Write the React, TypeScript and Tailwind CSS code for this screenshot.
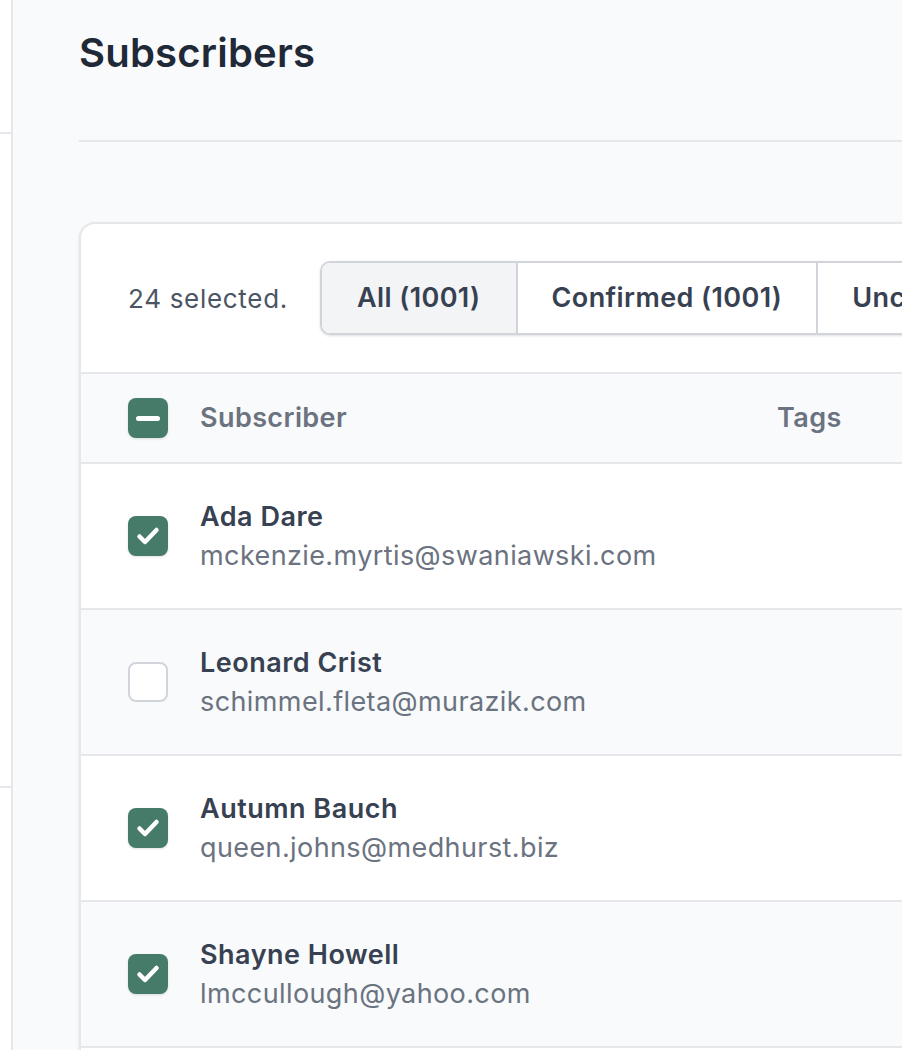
const subscribers = [
  { name: 'Ada Dare', email: 'mckenzie.myrtis@swaniawski.com', checked: true },
  { name: 'Leonard Crist', email: 'schimmel.fleta@murazik.com', checked: false },
  { name: 'Autumn Bauch', email: 'queen.johns@medhurst.biz', checked: true },
  { name: 'Shayne Howell', email: 'lmccullough@yahoo.com', checked: true },
  { name: 'Lorine Bins', email: 'ebert.kaley@gmail.com', checked: true },
];

function Checkbox({ state }: { state: 'checked' | 'unchecked' | 'mixed' }) {
  if (state === 'unchecked') {
    return <div className="w-[40px] h-[40px] shrink-0 rounded-[8px] border-2 border-[#d1d5db] bg-white" />;
  }
  return (
    <div className="w-[40px] h-[40px] shrink-0 rounded-[8px] bg-[#467a69] flex items-center justify-center shadow-sm">
      {state === 'checked' ? (
        <svg className="w-[40px] h-[40px]" viewBox="0 0 40 40" fill="none">
          <path d="M11.5 20.5L17 26L28.5 14" stroke="white" strokeWidth="4.5" strokeLinecap="round" strokeLinejoin="round" />
        </svg>
      ) : (
        <div className="w-[24px] h-[5px] rounded-full bg-white" />
      )}
    </div>
  );
}

export default function App() {
  return (
    <div className="flex w-full h-[1050px] overflow-hidden bg-[#f9fafb] font-['Inter',sans-serif]">
      {/* Sidebar edge */}
      <div className="w-[13px] shrink-0 border-r-2 border-[#e5e7eb] bg-white">
        <div className="h-[134px] border-b-2 border-[#e5e7eb]" />
        <div className="h-[654px] border-b-2 border-[#e5e7eb]" />
      </div>

      {/* Main */}
      <div className="flex-1 min-w-0 pl-[66px]">
        <h1 className="pt-[29px] text-[40px] leading-[48px] font-semibold text-[#1f2937] tracking-[0.2px]">
          Subscribers
        </h1>
        <div className="mt-[63px] border-t-2 border-[#e5e7eb]" />

        <div className="mt-[80px] w-[900px] rounded-[16px] border-2 border-[#e5e7eb] bg-white shadow-sm overflow-hidden">
          {/* Toolbar */}
          <div className="flex items-center px-[47px] py-[37px] whitespace-nowrap">
            <span className="shrink-0 text-[26px] tracking-[0.7px] text-[#4b5563] mr-[32px]">24 selected.</span>
            <div className="flex shrink-0 rounded-[10px] border-2 border-[#d1d5db] shadow-sm overflow-hidden">
              <button className="h-[70px] px-[35px] bg-[#f3f4f6] text-[27px] font-semibold tracking-[0.4px] text-[#374151]">
                All (1001)
              </button>
              <button className="h-[70px] px-[34px] bg-white border-l-2 border-[#d1d5db] text-[27px] font-semibold tracking-[0.4px] text-[#374151]">
                Confirmed (1001)
              </button>
              <button className="h-[70px] px-[34px] bg-white border-l-2 border-[#d1d5db] text-[27px] font-semibold tracking-[0.4px] text-[#374151]">
                Unconfirmed (0)
              </button>
            </div>
          </div>

          {/* Header */}
          <div className="flex items-center h-[92px] px-[47px] bg-[#f9fafb] border-y-2 border-[#e5e7eb] whitespace-nowrap">
            <Checkbox state="mixed" />
            <span className="ml-[32px] w-[577px] shrink-0 text-[27px] font-semibold tracking-[0.4px] text-[#6b7280]">
              Subscriber
            </span>
            <span className="text-[27px] font-semibold tracking-[0.4px] text-[#6b7280]">Tags</span>
          </div>

          {/* Rows */}
          {subscribers.map((s, i) => (
            <div
              key={s.email}
              className={`flex items-center h-[146px] px-[47px] border-b-2 border-[#e5e7eb] whitespace-nowrap ${
                i % 2 === 1 ? 'bg-[#f8fafb]' : 'bg-white'
              }`}
            >
              <Checkbox state={s.checked ? 'checked' : 'unchecked'} />
              <div className="ml-[32px]">
                <p className="text-[27px] leading-[39px] font-semibold tracking-[0.5px] text-[#374151]">{s.name}</p>
                <p className="text-[27px] leading-[39px] tracking-[0.4px] text-[#6b7280]">{s.email}</p>
              </div>
            </div>
          ))}
        </div>
      </div>
    </div>
  );
}
